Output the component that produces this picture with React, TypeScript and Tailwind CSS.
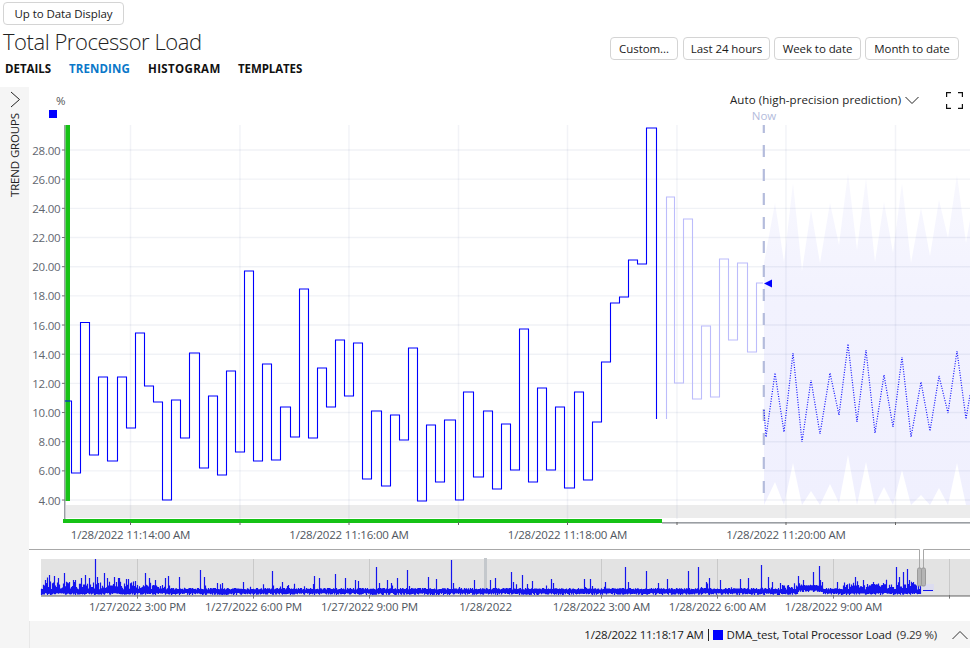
import React from "react";

const step: [number, number][] = [
  [71.5,401],[71.5,473],[80.5,473],[80.5,322.5],[89.5,322.5],[89.5,455],[98.5,455],[98.5,377],[107.5,377],[107.5,461],[117.5,461],[117.5,377],[126.5,377],[126.5,428],[135.5,428],[135.5,333],[144.5,333],[144.5,386],[153.5,386],[153.5,402],[162.5,402],[162.5,500],[171.5,500],[171.5,400],[180.5,400],[180.5,438],[189.5,438],[189.5,353],[199.5,353],[199.5,468],[208.5,468],[208.5,396],[217.5,396],[217.5,475],[226.5,475],[226.5,371],[235.5,371],[235.5,452],[244.5,452],[244.5,271],[253.5,271],[253.5,461],[262.5,461],[262.5,364],[271.5,364],[271.5,460],[280.5,460],[280.5,407],[290.5,407],[290.5,437],[299.5,437],[299.5,289],[308.5,289],[308.5,438],[317.5,438],[317.5,368],[326.5,368],[326.5,407],[335.5,407],[335.5,340],[344.5,340],[344.5,396],[353.5,396],[353.5,343],[362.5,343],[362.5,479],[371.5,479],[371.5,411],[381.5,411],[381.5,486],[390.5,486],[390.5,415],[399.5,415],[399.5,440],[408.5,440],[408.5,348],[417.5,348],[417.5,501],[426.5,501],[426.5,425],[435.5,425],[435.5,482],[444.5,482],[444.5,420],[455.5,420],[455.5,500],[463.5,500],[463.5,392],[473.5,392],[473.5,477],[483.5,477],[483.5,411],[492.5,411],[492.5,489],[501.5,489],[501.5,424],[510.5,424],[510.5,470],[519.5,470],[519.5,329],[528.5,329],[528.5,482],[537.5,482],[537.5,388],[546.5,388],[546.5,470],[555.5,470],[555.5,407],[564.5,407],[564.5,488],[574.5,488],[574.5,392],[583.5,392],[583.5,480],[592.5,480],[592.5,422],[601.5,422],[601.5,362],[610.5,362],[610.5,303],[619.5,303],[619.5,297],[628.5,297],[628.5,260],[637.5,260],[637.5,264],[646.5,264],[646.5,128],[656.5,128],[656.5,419],
];
const stepPts = [[65, 401] as [number, number], ...step].map((p) => p.join(",")).join(" ");
const ghostPts = "666.5,419 666.5,197 674.5,197 674.5,383 683.5,383 683.5,219 692.5,219 692.5,399 701.5,399 701.5,326 710.5,326 710.5,397 719.5,397 719.5,259 728.5,259 728.5,340 737.5,340 737.5,263 747.5,263 747.5,352 756.5,352 756.5,283 763,283";
const forecast = "764,410 766,437 775,373 784,432 793,353 802,442 811,380 820,434 830,373 839,415 848,344 857,422 866,350 875,433 884,375 893,427 902,357 911,437 921,382 930,431 939,376 948,413 957,351 966,419 970,395";
const band = "764,505 764,263 775,203 784,262 793,183 802,271 811,210 820,263 830,203 839,245 848,173 857,250 866,178 875,262 884,202 893,253 902,183 911,263 921,208 930,256 939,200 948,238 957,175 966,243 970,220 970,505 966,505 957,463 948,505 939,488 930,505 921,495 911,505 902,470 893,505 884,487 875,505 866,462 857,505 848,455 839,503 830,484 820,505 811,491 802,505 793,463 784,505 775,482";

const hLines = Array.from({ length: 13 }, (_, i) => 150 + i * 29.17);
const yLabels = ["28.00","26.00","24.00","22.00","20.00","18.00","16.00","14.00","12.00","10.00","8.00","6.00","4.00"];
const vLines = [130.5, 240, 349, 458.5, 567.5, 677, 786, 895.5];
const xLabels: [number, string][] = [
  [130.5, "1/28/2022 11:14:00 AM"],
  [349, "1/28/2022 11:16:00 AM"],
  [567.5, "1/28/2022 11:18:00 AM"],
  [786, "1/28/2022 11:20:00 AM"],
];
const navTicks = [137.5, 253.5, 369.5, 601.5, 717.5, 833.5, 949.5];
const navLabels: [number, string][] = [
  [137.5, "1/27/2022 3:00 PM"],
  [253.5, "1/27/2022 6:00 PM"],
  [369.5, "1/27/2022 9:00 PM"],
  [485.5, "1/28/2022"],
  [601.5, "1/28/2022 3:00 AM"],
  [717.5, "1/28/2022 6:00 AM"],
  [833.5, "1/28/2022 9:00 AM"],
];
const spikes: [number, number][] = [
  [49,575],[54,576],[58,578],[64,573],[69,582],[75,580],[85,575],[89,578],[95,559],[97,577],[104,573],[107,578],[114,577],[119,578],[126,579],[128,579],[137,585],[145,573],[149,578],[155,580],[165,578],[168,576],[179,577],[200,570],[204,577],[217,583],[222,583],[243,582],[272,571],[282,582],[288,585],[314,576],[319,578],
  [335,574],[345,578],[355,580],[358,581],[376,567],[379,583],[387,580],[391,583],[397,578],[407,570],[428,577],[436,579],[451,560],[453,583],[459,587],[474,580],[490,580],[495,578],[511,572],[513,582],[522,575],[532,581],[551,579],[553,583],[584,579],[590,579],[605,582],[625,567],[628,582],[646,571],
  [658,583],[667,579],[688,571],[698,567],[706,582],[709,578],[720,580],[740,579],[748,578],[761,565],[768,577],[772,582],[780,583],[798,576],[803,580],[813,572],[819,566],[822,582],[837,582],[855,577],[863,580],[873,582],[883,583],[896,567],[899,577],[903,572],[907,569],[912,583],[918,580],
];
function buildWave() {
  let seed = 12345;
  const rnd = () => {
    seed = (seed * 16807) % 2147483647;
    return seed / 2147483647;
  };
  let d = "";
  for (let x = 41; x < 921; x++) {
    const busy = x < 135 ? 1 : x < 170 ? 0.6 : x > 780 && x < 800 ? 0.6 : x > 840 ? 0.75 : 0.2;
    const raised = x >= 798 && x <= 822;
    const top = (raised ? 586 : 589.5) - rnd() * 8 * busy - (rnd() < 0.25 * busy ? rnd() * 5 : 0);
    const bot = raised ? 590 + rnd() * 2 : 593 + rnd() * 2;
    d += `M${x + 0.5} ${top.toFixed(1)}V${bot.toFixed(1)}`;
  }
  spikes.forEach(([x, y]) => {
    d += `M${x + 0.5} ${y}V592`;
  });
  return d;
}
const wave = buildWave();

function Btn({ children, cls }: { children: React.ReactNode; cls: string }) {
  return (
    <button className={`h-[23px] rounded-[4px] border border-[#d4d4d4] bg-white text-[11.5px] leading-none tracking-[-0.08px] text-[#1a1a1a] ${cls}`}>
      {children}
    </button>
  );
}

export default function App() {
  return (
    <div className="flex h-[648px] w-[970px] flex-col overflow-hidden bg-white font-['Open_Sans',sans-serif] text-[#1a1a1a]">
      <header className="flex h-[87px] shrink-0 items-start justify-between">
        <div className="flex flex-col pt-[2px]">
          <Btn cls="ml-[3px] w-[121px]">Up to Data Display</Btn>
          <h1 className="ml-[3px] mt-[1px] h-[31px] text-[22px] font-light leading-[31px] tracking-[-0.45px] text-[#222]">Total Processor Load</h1>
          <nav className="ml-[5px] mt-[2px] flex text-[11.5px] font-bold uppercase leading-[20px] tracking-[-0.1px] text-[#111]">
            <span className="w-[64px] tracking-[0px]">Details</span>
            <span className="w-[79px] tracking-[0.1px] text-[#0b78c9]">Trending</span>
            <span className="w-[90px] tracking-[0.35px]">Histogram</span>
            <span>Templates</span>
          </nav>
        </div>
        <div className="mr-[11px] mt-[37px] flex">
          <Btn cls="w-[68px]">Custom...</Btn>
          <Btn cls="ml-[5px] w-[87px]">Last 24 hours</Btn>
          <Btn cls="ml-[4px] w-[87px]">Week to date</Btn>
          <Btn cls="ml-[4px] w-[94px]">Month to date</Btn>
        </div>
      </header>

      <div className="flex min-h-0 flex-1">
        <aside className="flex w-[29px] shrink-0 flex-col items-center bg-[#f5f5f5] pt-[4px]">
          <svg width="12" height="17" viewBox="0 0 12 17" fill="none" stroke="#222" strokeWidth="1">
            <path d="M2 1l8.5 7.5L2 16" />
          </svg>
          <span className="mt-[5px] rotate-180 text-[11.5px] leading-none tracking-[-0.15px] text-[#222] [writing-mode:vertical-rl]">TREND GROUPS</span>
        </aside>

        <main className="flex min-w-0 flex-1 flex-col">
          <div className="flex h-[38px] shrink-0 items-start">
            <div className="ml-[20px] w-[20px] pt-[6px]">
              <div className="ml-[7px] text-[11.5px] leading-[16px] text-[#555]">%</div>
              <div className="mt-[1px] h-[8px] w-[8px] bg-[#0000ff]" />
            </div>
            <div className="ml-[661px] flex w-[190px] items-center whitespace-nowrap pt-[4px] text-[11.5px] leading-[18px] tracking-[0.08px] text-[#222]">
              <span className="w-[175px]">Auto (high-precision prediction)</span>
              <svg width="14" height="9" viewBox="0 0 14 9" fill="none" stroke="#222" strokeWidth="1">
                <path d="M.5 1l6.5 6.5L13.500 1" />
              </svg>
            </div>
            <svg className="ml-[26px] mt-[5px]" width="17" height="17" viewBox="0 0 17 17" fill="none" stroke="#111" strokeWidth="1.2">
              <path d="M.6 5V.6H5M12 .6h4.400V5M16.400 12v4.400H12M5 16.400H.6V12" />
            </svg>
          </div>

          <svg className="shrink-0 overflow-visible" width="941" height="424" viewBox="29 125 941 424">
            <defs>
              <linearGradient id="bandFill" x1="0" y1="170" x2="0" y2="505" gradientUnits="userSpaceOnUse">
                <stop offset="0" stopColor="#f8f8fe" />
                <stop offset="0.4" stopColor="#f2f2fe" />
                <stop offset="1" stopColor="#f0f0fe" />
              </linearGradient>
            </defs>
            <polygon points={band} fill="url(#bandFill)" />
            <rect x="66" y="505" width="904" height="13" fill="#ececec" />
            {hLines.map((y) => (
              <line key={y} x1="60" x2="970" y1={y} y2={y} stroke="#5a6a9a" strokeOpacity="0.09" strokeWidth="1.4" />
            ))}
            {vLines.map((x) => (
              <line key={x} x1={x} x2={x} y1="125" y2="519" stroke="#5a6a9a" strokeOpacity="0.08" strokeWidth="1.4" />
            ))}
            <rect x="64" y="125" width="1.500" height="398" fill="#9a9ea3" />
            <rect x="65.500" y="125" width="4.500" height="376" fill="#16c216" />
            {hLines.map((y) => (
              <line key={`t${y}`} x1="62" x2="65" y1={y} y2={y} stroke="#777" strokeWidth="1" />
            ))}
            <rect x="662" y="522" width="308" height="1.600" fill="#9a9ea3" />
            <rect x="63" y="519" width="599" height="4" fill="#16c216" />
            {vLines.map((x) => (
              <line key={`x${x}`} x1={x} x2={x} y1="522" y2="525" stroke="#666" strokeWidth="1" />
            ))}
            {yLabels.map((t, i) => (
              <text key={t} x="60.500" y={hLines[i] + 4.500} textAnchor="end" fontSize="11.500" fill="#5f6670" className="tracking-[-0.2px]">{t}</text>
            ))}
            {xLabels.map(([x, t]) => (
              <text key={t} x={x} y="539" textAnchor="middle" fontSize="11.500" fill="#50565e" className="tracking-[-0.2px]">{t}</text>
            ))}
            <line x1="763.800" x2="763.800" y1="125" y2="505" stroke="#b4bcdc" strokeWidth="2.200" strokeDasharray="12 12" strokeDashoffset="4" />
            <text x="764" y="120" textAnchor="middle" fontSize="11.500" fill="#b4bcdc">Now</text>
            <polyline points={stepPts} fill="none" stroke="#0000ff" strokeWidth="1.100" />
            <polyline points={ghostPts} fill="none" stroke="#bcbcfb" strokeWidth="1.100" />
            <polyline points={forecast} fill="none" stroke="#1010ff" strokeWidth="1.200" strokeDasharray="1 1.500" />
            <polygon points="764,283.500 772,279.500 772,287.500" fill="#0000ff" />
          </svg>

          <svg className="shrink-0" width="941" height="72" viewBox="29 549 941 72">
            <rect x="41" y="559" width="929" height="36" fill="#e3e3e3" />
            <rect x="41" y="595" width="929" height="1.800" fill="#a0a0a0" />
            {navTicks.map((x) => (
              <line key={x} x1={x} x2={x} y1="559" y2="598.500" stroke="#c9c9c9" strokeWidth="1" />
            ))}
            {navTicks.map((x) => (
              <line key={`k${x}`} x1={x} x2={x} y1="595" y2="598.500" stroke="#777" strokeWidth="1" />
            ))}
            <rect x="484" y="558" width="3" height="31" fill="#c4c8cc" />
            <rect x="923" y="584" width="11" height="8" fill="#dcdcf0" />
            <path d={wave} stroke="#1414ee" strokeWidth="1.200" fill="none" />
            <line x1="923" x2="933" y1="590.500" y2="590.500" stroke="#1414ee" strokeWidth="1" />
            <path d="M29 549.500H919.500V568M923.500 568V549.500H970" fill="none" stroke="#a8a8a8" strokeWidth="1" />
            <rect x="917.500" y="568" width="4" height="18" rx="1.500" fill="#b4b4b4" stroke="#9a9a9a" strokeWidth="1" />
            <rect x="921.500" y="568" width="4" height="18" rx="1.500" fill="#b4b4b4" stroke="#9a9a9a" strokeWidth="1" />
            {navLabels.map(([x, t]) => (
              <text key={t} x={x} y="611" textAnchor="middle" fontSize="11.500" fill="#50565e" className="tracking-[-0.2px]">{t}</text>
            ))}
          </svg>

          <footer className="flex h-[27px] shrink-0 items-center justify-end border-l border-[#e8e8e8] bg-[#f5f5f5] text-[11.5px] leading-none tracking-[-0.2px] text-[#1a1a1a]">
            <span>1/28/2022 11:18:17 AM</span>
            <span className="mx-[4px] h-[12px] w-px bg-[#222]" />
            <span className="h-[10px] w-[10px] bg-[#0000ff]" />
            <span className="ml-[4px] tracking-[-0.14px]">DMA_test, Total Processor Load</span>
            <span className="ml-[5px] text-[#333]">(9.29 %)</span>
            <svg className="ml-[15px] mr-[2px]" width="16" height="10" viewBox="0 0 16 10" fill="none" stroke="#333" strokeWidth="1">
              <path d="M.5 9L8 1.500 15.500 9" />
            </svg>
          </footer>
        </main>
      </div>
    </div>
  );
}
